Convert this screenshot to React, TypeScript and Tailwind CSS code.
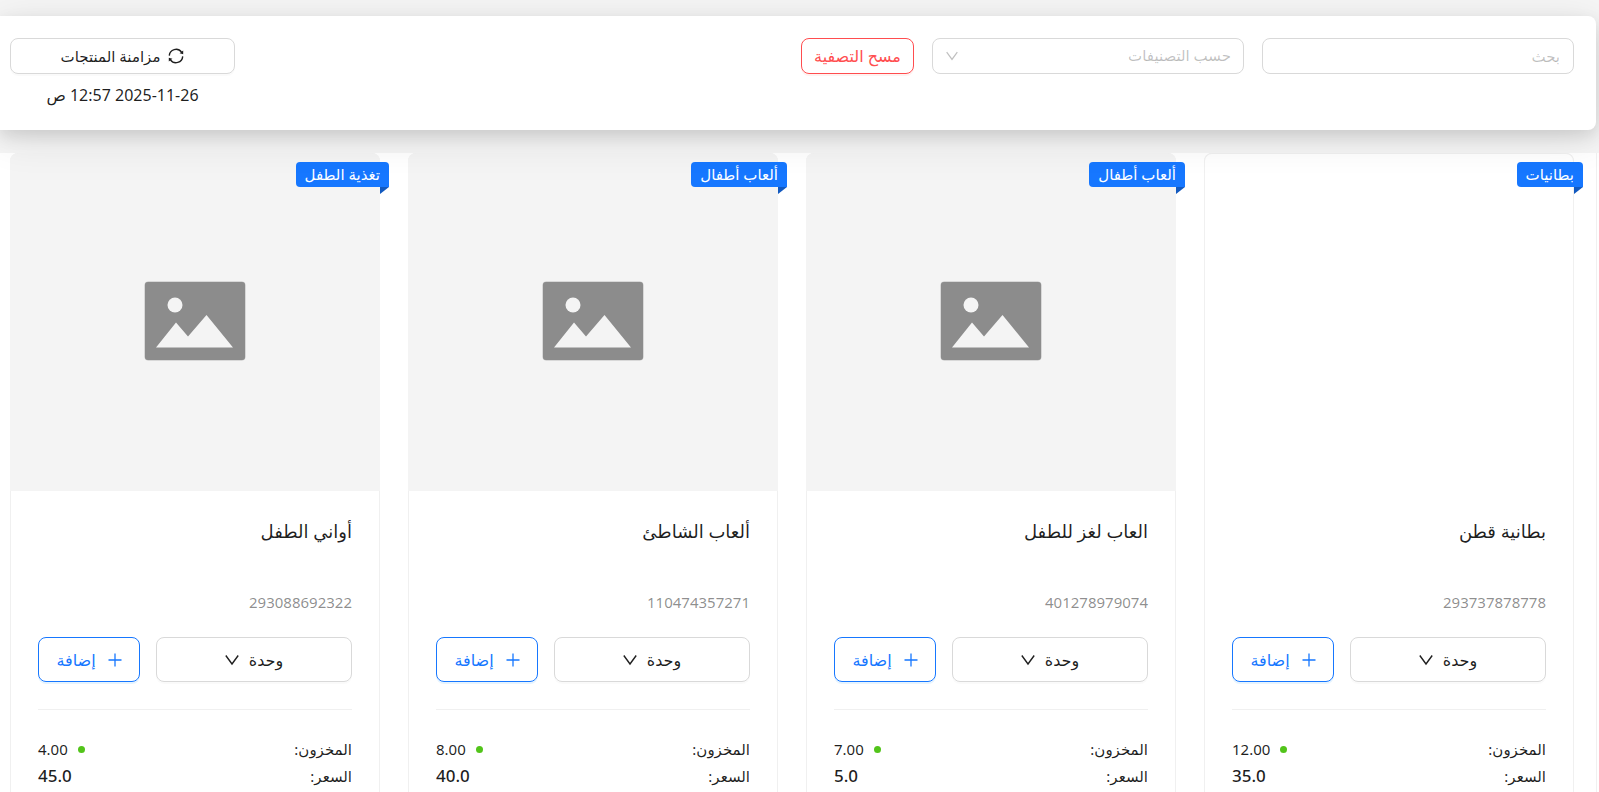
import { useState } from "react";

interface Product {
  name: string;
  category: string;
  barcode: string;
  stock: string;
  price: string;
  hasPhoto: boolean;
}

const PRODUCTS: Product[] = [
  { name: "بطانية قطن", category: "بطانيات", barcode: "293737878778", stock: "12.00", price: "35.0", hasPhoto: true },
  { name: "العاب لغز للطفل", category: "ألعاب أطفال", barcode: "401278979074", stock: "7.00", price: "5.0", hasPhoto: false },
  { name: "ألعاب الشاطئ", category: "ألعاب أطفال", barcode: "110474357271", stock: "8.00", price: "40.0", hasPhoto: false },
  { name: "أواني الطفل", category: "تغذية الطفل", barcode: "293088692322", stock: "4.00", price: "45.0", hasPhoto: false },
];

const CATEGORIES = ["بطانيات", "ألعاب أطفال", "تغذية الطفل"];

function SyncIcon() {
  return (
    <svg className="size-4" viewBox="0 0 16 16" fill="none" stroke="currentColor" strokeWidth="1.4" aria-hidden="true">
      <path d="M1.300 7.600A6.700 6.700 0 0 1 13.500 4.200M14.700 8.400A6.700 6.700 0 0 1 2.500 11.800" />
      <path d="M15.200 2.400v3.800l-3.600-.9ZM.8 13.600V9.800l3.600.9Z" fill="currentColor" stroke="none" />
    </svg>
  );
}

function DownIcon({ className = "" }: { className?: string }) {
  return (
    <svg className={className} viewBox="0 0 14 14" fill="none" stroke="currentColor" strokeWidth="1.4" aria-hidden="true">
      <path d="M.8 2.500 7 11l6.200-8.500" />
    </svg>
  );
}

function PlusIcon() {
  return (
    <svg className="size-[14px]" viewBox="0 0 14 14" fill="none" stroke="currentColor" strokeWidth="1.300" aria-hidden="true">
      <path d="M7 .5v13M.5 7h13" />
    </svg>
  );
}

function PlaceholderImage() {
  return (
    <svg className="mb-[2px] h-20 w-[102px]" viewBox="0 0 102 80" role="img" aria-label="لا توجد صورة">
      <rect x=".5" y=".5" width="101" height="79" rx="4" fill="#bcbcbc" />
      <rect x="1" y="1" width="100" height="78" rx="3" fill="#8c8c8c" />
      <circle cx="31" cy="24" r="7.500" fill="#f4f4f4" />
      <path d="M12 66.500 32 41.500l12 14L62.500 34 89 66.500Z" fill="#f4f4f4" />
    </svg>
  );
}

function ProductCard({ product }: { product: Product }) {
  return (
    <article className="relative rounded-lg border border-[#f0f0f0] bg-white">
      <div
        className={`-mx-px -mt-px flex h-[338px] items-center justify-center rounded-t-lg ${
          product.hasPhoto ? "border border-b-0 border-[#f0f0f0] bg-white" : "bg-[#f4f4f4]"
        }`}
      >
        {!product.hasPhoto && <PlaceholderImage />}
      </div>

      {/* Category ribbon, folded over the card's edge */}
      <div className="absolute -right-[10px] top-2 rounded rounded-br-none bg-[#1677ff] px-[9px] text-[15px] leading-[25px] text-white">
        {product.category}
        <svg className="absolute right-0 top-full h-[7px] w-[9px]" viewBox="0 0 9 7" aria-hidden="true">
          <path d="M0 0h9L0 7Z" fill="#1259bf" />
        </svg>
      </div>

      <div className="px-[27px] pb-7 pt-[23px]">
        <h2 className="text-lg font-medium leading-[34px]">{product.name}</h2>
        <p className="mt-[42px] text-[15px] leading-6 text-black/45">{product.barcode}</p>

        <div className="mt-[23px] flex gap-4">
          <button
            type="button"
            className="flex h-[45px] flex-1 items-center justify-center gap-[10px] rounded-lg border border-[#d9d9d9] shadow-[0_2px_0_rgba(0,0,0,0.02)]"
          >
            وحدة
            <DownIcon className="size-[14px]" />
          </button>
          <button
            type="button"
            className="flex h-[45px] w-[102px] items-center justify-center gap-3 rounded-lg border border-[#1677ff] text-[#1677ff] shadow-[0_2px_0_rgba(5,145,255,0.1)]"
          >
            <PlusIcon />
            إضافة
          </button>
        </div>

        <hr className="mb-[26px] mt-[27px] border-[#f0f0f0]" />

        <dl>
          <div className="flex items-center justify-between text-[15px] leading-[26px]">
            <dt>المخزون:</dt>
            <dd className="flex items-center gap-[10px]">
              <span className="size-[7px] rounded-full bg-[#52c41a]" />
              {product.stock}
            </dd>
          </div>
          <div className="flex items-center justify-between leading-7">
            <dt className="text-[15px]">السعر:</dt>
            <dd className="text-[17px] font-medium">{product.price}</dd>
          </div>
        </dl>
      </div>
    </article>
  );
}

export default function App() {
  const [search, setSearch] = useState("");
  const [category, setCategory] = useState("");

  const clearFilters = () => {
    setSearch("");
    setCategory("");
  };

  return (
    <div
      dir="rtl"
      className="h-screen overflow-hidden bg-[#f5f5f5] pt-4 font-['Noto_Sans','DejaVu_Sans',sans-serif] text-base text-black/88"
    >
      <header className="relative z-10 mr-[3px] flex items-start justify-between rounded-r-lg bg-white pb-[22px] pl-[10px] pr-[22px] pt-[22px] shadow-[0_8px_40px_rgba(0,0,0,0.11),0_6px_16px_rgba(0,0,0,0.1)]">
        <div className="flex gap-[18px]">
          <input
            type="search"
            aria-label="بحث"
            placeholder="بحث"
            value={search}
            onChange={(e) => setSearch(e.target.value)}
            className="h-9 w-[312px] rounded-lg border border-[#d9d9d9] px-[13px] text-[15px] placeholder:text-black/25"
          />
          <div className="relative">
            <select
              aria-label="حسب التصنيفات"
              value={category}
              onChange={(e) => setCategory(e.target.value)}
              className="h-9 w-[312px] appearance-none rounded-lg border border-[#d9d9d9] px-3 pb-[2px] text-[15px] text-black/25"
            >
              <option value="">حسب التصنيفات</option>
              {CATEGORIES.map((c) => (
                <option key={c}>{c}</option>
              ))}
            </select>
            <DownIcon className="pointer-events-none absolute left-[14px] top-3 size-3 text-black/25" />
          </div>
          <button
            type="button"
            onClick={clearFilters}
            className="h-9 w-[113px] whitespace-nowrap rounded-lg border border-[#ff4d4f] text-base text-[#ff4d4f] shadow-[0_2px_0_rgba(255,38,5,0.06)]"
          >
            مسح التصفية
          </button>
        </div>

        <div className="w-[225px]">
          <button
            type="button"
            className="flex h-9 w-full items-center justify-center gap-2 rounded-lg border border-[#d9d9d9] text-[15px] shadow-[0_2px_0_rgba(0,0,0,0.02)]"
          >
            <SyncIcon />
            مزامنة المنتجات
          </button>
          <p className="mt-2 text-center leading-[26px]">
            <bdi dir="ltr">2025-11-26</bdi> 12:57 ص
          </p>
        </div>
      </header>

      <div className="mt-[23px] bg-white pr-[2px]">
        <main className="grid grid-cols-4 gap-7 border-r border-[#f0f0f0] pl-[10px] pr-[22px]">
          {PRODUCTS.map((product) => (
            <ProductCard key={product.barcode} product={product} />
          ))}
        </main>
      </div>
    </div>
  );
}
